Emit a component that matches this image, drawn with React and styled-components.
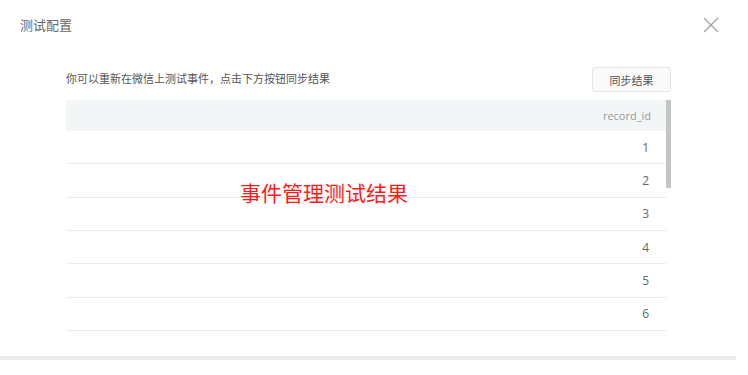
import React from "react";
import styled, { createGlobalStyle } from "styled-components";

const Global = createGlobalStyle`
  html, body { margin: 0; padding: 0; background: #fff; }
  body { font-family: "Noto Sans CJK SC", "Noto Sans", sans-serif; }
  * { box-sizing: border-box; }
`;

const Modal = styled.div`
  position: relative;
  width: 736px;
  height: 360px;
  background: #fff;
  border-bottom: 4px solid #ececec;
`;

const Header = styled.div`
  height: 50px;
  display: flex;
  align-items: center;
  justify-content: space-between;
  padding: 0 17px 0 20px;
`;

const Title = styled.div`
  font-size: 13px;
  color: #666;
  line-height: 20px;
`;

const CloseButton = styled.button`
  width: 16px;
  height: 16px;
  padding: 0;
  border: none;
  background: transparent;
  display: flex;
  align-items: center;
  justify-content: center;
  cursor: pointer;
`;

const Body = styled.div`
  padding: 17px 65px 0 66px;
`;

const Toolbar = styled.div`
  height: 25px;
  display: flex;
  align-items: center;
  justify-content: space-between;
  margin-bottom: 8px;
`;

const Desc = styled.div`
  font-size: 11px;
  color: #555;
  line-height: 16px;
  margin-top: -3px;
`;

const SyncButton = styled.button`
  width: 79px;
  height: 25px;
  border: 1px solid #e6e6e6;
  border-radius: 3px;
  background: #fafafa;
  font-family: inherit;
  font-size: 11px;
  color: #555;
  padding: 0;
`;

const TableWrap = styled.div`
  display: flex;
  height: 240px;
`;

const Table = styled.div`
  flex: 1;
  display: flex;
  flex-direction: column;
`;

const HeadRow = styled.div`
  height: 31px;
  flex: none;
  background: #f3f6f7;
  display: flex;
  align-items: center;
  justify-content: flex-end;
  padding-right: 15px;
  font-size: 11px;
  color: #9a9a9a;
  font-family: "Open Sans", "Noto Sans", sans-serif;
`;

const Row = styled.div`
  height: 33.33px;
  flex: none;
  border-bottom: 1px solid #ececec;
  display: flex;
  align-items: center;
  justify-content: flex-end;
  padding-right: 17px;
  font-size: 12px;
  color: #666;
  font-family: "Open Sans", "Noto Sans", sans-serif;
`;

const Scrollbar = styled.div`
  width: 5px;
`;

const Thumb = styled.div`
  height: 88px;
  background: #c4c4c4;
`;

const Watermark = styled.div`
  position: absolute;
  left: 240px;
  top: 180px;
  font-size: 21px;
  line-height: 24px;
  color: #ff1a1a;
  white-space: nowrap;
`;

export default function App() {
  const rows = [1, 2, 3, 4, 5, 6];
  return (
    <>
      <Global />
      <Modal>
        <Header>
          <Title>测试配置</Title>
          <CloseButton aria-label="close">
            <svg width="16" height="16" viewBox="0 0 16 16">
              <path d="M1 1 L15 15 M15 1 L1 15" stroke="#a0a0a0" strokeWidth="1.3" fill="none" />
            </svg>
          </CloseButton>
        </Header>
        <Body>
          <Toolbar>
            <Desc>你可以重新在微信上测试事件，点击下方按钮同步结果</Desc>
            <SyncButton>同步结果</SyncButton>
          </Toolbar>
          <TableWrap>
            <Table>
              <HeadRow>record_id</HeadRow>
              {rows.map((r) => (
                <Row key={r}>{r}</Row>
              ))}
            </Table>
            <Scrollbar>
              <Thumb />
            </Scrollbar>
          </TableWrap>
        </Body>
        <Watermark>事件管理测试结果</Watermark>
      </Modal>
    </>
  );
}
